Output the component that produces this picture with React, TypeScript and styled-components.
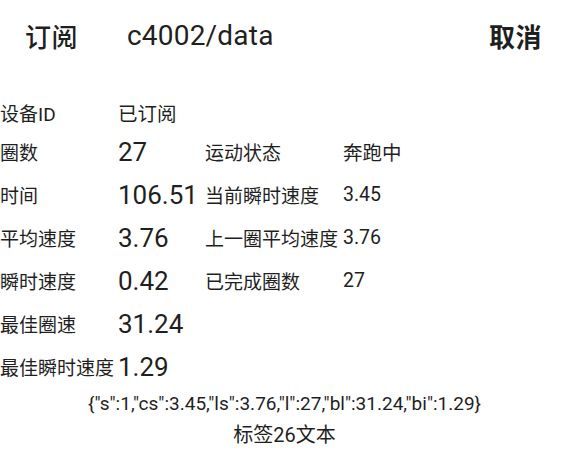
import styled, { createGlobalStyle } from "styled-components";

const GlobalStyle = createGlobalStyle`
  html, body {
    margin: 0;
    padding: 0;
    background: #ffffff;
  }
  body {
    font-family: Roboto, "Noto Sans CJK SC", sans-serif;
    color: #1f1f1f;
  }
`;

const Page = styled.div`
  width: 569px;
  height: 455px;
  overflow: hidden;
  display: flex;
  flex-direction: column;
`;

const Header = styled.div`
  height: 70px;
  display: flex;
  flex-direction: row;
  align-items: center;
  padding: 0 27px 0 25px;
`;

const HeaderAction = styled.div<{ $weight?: number }>`
  font-size: 26px;
  font-weight: ${(props) => props.$weight ?? 500};
  letter-spacing: 0.5px;
`;

const Topic = styled.div`
  flex: 1;
  margin-left: 49px;
  font-size: 28px;
  font-weight: 400;
  letter-spacing: 0.2px;
`;

const Table = styled.div`
  margin-top: 25px;
  display: flex;
  flex-direction: column;
`;

const Row = styled.div<{ $height: number }>`
  display: grid;
  grid-template-columns: 118px 87px 138px auto;
  align-items: center;
  height: ${(props) => props.$height}px;
`;

const Label = styled.div`
  font-size: 19px;
  white-space: nowrap;
`;

const Value = styled.div<{ $big?: boolean }>`
  font-size: ${(props) => (props.$big ? "26px" : "19.5px")};
  white-space: nowrap;
`;

const Raw = styled.div`
  margin-top: 4px;
  text-align: center;
  font-size: 19px;
  line-height: 24px;
  letter-spacing: 0;
`;

const Caption = styled.div`
  margin-top: 5px;
  text-align: center;
  font-size: 20px;
  line-height: 28px;
`;

type Item = { label: string; value: string; big?: boolean };

const rows: { height: number; cells: Item[] }[] = [
  { height: 35, cells: [{ label: "设备ID", value: "已订阅" }] },
  {
    height: 43,
    cells: [
      { label: "圈数", value: "27", big: true },
      { label: "运动状态", value: "奔跑中" },
    ],
  },
  {
    height: 43,
    cells: [
      { label: "时间", value: "106.51", big: true },
      { label: "当前瞬时速度", value: "3.45" },
    ],
  },
  {
    height: 43,
    cells: [
      { label: "平均速度", value: "3.76", big: true },
      { label: "上一圈平均速度", value: "3.76" },
    ],
  },
  {
    height: 43,
    cells: [
      { label: "瞬时速度", value: "0.42", big: true },
      { label: "已完成圈数", value: "27" },
    ],
  },
  { height: 43, cells: [{ label: "最佳圈速", value: "31.24", big: true }] },
  { height: 43, cells: [{ label: "最佳瞬时速度", value: "1.29", big: true }] },
];

export default function App() {
  return (
    <>
      <GlobalStyle />
      <Page>
        <Header>
          <HeaderAction>订阅</HeaderAction>
          <Topic>c4002/data</Topic>
          <HeaderAction $weight={700}>取消</HeaderAction>
        </Header>
        <Table>
          {rows.map((row, i) => (
            <Row key={i} $height={row.height}>
              {row.cells.map((cell) => [
                <Label key={cell.label + "-l"}>{cell.label}</Label>,
                <Value key={cell.label + "-v"} $big={cell.big}>
                  {cell.value}
                </Value>,
              ])}
            </Row>
          ))}
        </Table>
        <Raw>{'{"s":1,"cs":3.45,"ls":3.76,"l":27,"bl":31.24,"bi":1.29}'}</Raw>
        <Caption>标签26文本</Caption>
      </Page>
    </>
  );
}
